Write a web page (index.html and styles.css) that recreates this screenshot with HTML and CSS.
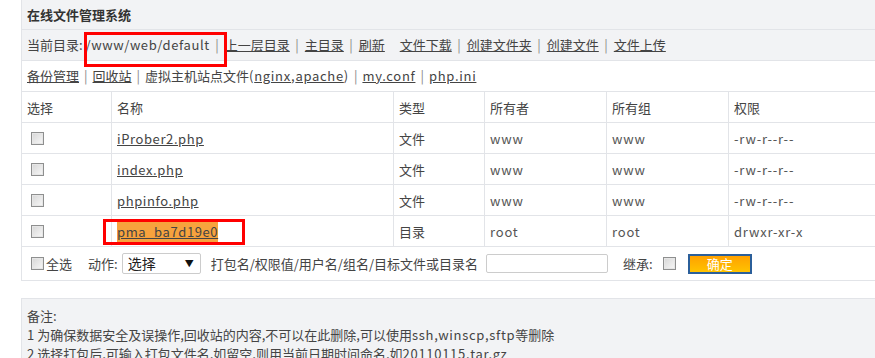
FILE: index.html
```html
<!DOCTYPE html>
<html lang="zh-CN">
<head>
    <meta charset="UTF-8">
    <title>在线文件管理系统</title>
    <link rel="stylesheet" href="styles.css">
</head>
<body>
    <div class="panel">
        <div class="title">在线文件管理系统</div>

        <div class="bar bar-gray">
            当前目录: <span class="path">/www/web/default</span><span class="sep">|</span><a href="#">上一层目录</a><span class="sep">|</span><a href="#">主目录</a><span class="sep">|</span><a href="#">刷新</a>
            <span class="gap"></span>
            <a href="#">文件下载</a><span class="sep">|</span><a href="#">创建文件夹</a><span class="sep">|</span><a href="#">创建文件</a><span class="sep">|</span><a href="#">文件上传</a>
        </div>

        <div class="bar">
            <a href="#">备份管理</a><span class="sep">|</span><a href="#">回收站</a><span class="sep">|</span>虚拟主机站点文件<span class="en">(<a href="#">nginx</a>,<a href="#">apache</a>)</span><span class="sep">|</span><a href="#" class="en">my.conf</a><span class="sep">|</span><a href="#" class="en">php.ini</a>
        </div>

        <table class="files">
            <tr>
                <th class="col-sel">选择</th>
                <th class="col-name">名称</th>
                <th class="col-type">类型</th>
                <th class="col-owner">所有者</th>
                <th class="col-group">所有组</th>
                <th>权限</th>
            </tr>
            <tr>
                <td><input type="checkbox" class="chk"></td>
                <td><a href="#">iProber2.php</a></td>
                <td>文件</td>
                <td class="latin">www</td>
                <td class="latin">www</td>
                <td class="latin">-rw-r--r--</td>
            </tr>
            <tr>
                <td><input type="checkbox" class="chk"></td>
                <td><a href="#">index.php</a></td>
                <td>文件</td>
                <td class="latin">www</td>
                <td class="latin">www</td>
                <td class="latin">-rw-r--r--</td>
            </tr>
            <tr>
                <td><input type="checkbox" class="chk"></td>
                <td><a href="#">phpinfo.php</a></td>
                <td>文件</td>
                <td class="latin">www</td>
                <td class="latin">www</td>
                <td class="latin">-rw-r--r--</td>
            </tr>
            <tr>
                <td><input type="checkbox" class="chk"></td>
                <td><a href="#" class="marked">pma_ba7d19e0</a></td>
                <td>目录</td>
                <td class="latin">root</td>
                <td class="latin">root</td>
                <td class="latin">drwxr-xr-x</td>
            </tr>
        </table>

        <div class="actions">
            <label class="all"><input type="checkbox" class="chk">全选</label>
            <span class="lbl lbl-act">动作:</span>
            <div class="select">选择<span class="arrow">▼</span></div>
            <span class="lbl">打包名/权限值/用户名/组名/目标文件或目录名</span>
            <input type="text" class="field">
            <span class="lbl inherit">继承:</span>
            <input type="checkbox" class="chk">
            <button class="ok">确定</button>
        </div>

        <!-- 标注框 -->
        <div class="mark mark-path"></div>
        <div class="mark mark-dir"></div>
    </div>

    <div class="notes">
        <p>备注:</p>
        <p>1 为确保数据安全及误操作,回收站的内容,不可以在此删除,可以使用<span class="en">ssh,winscp,sftp</span>等删除</p>
        <p>2 选择打包后,可输入打包文件名,如留空,则用当前日期时间命名,如<span class="en">20110115.tar.gz</span></p>
    </div>
</body>
</html>
```

FILE: styles.css
```css
body {
    margin: 0;
    padding: 0 0 0 21px;
    font-family: "Noto Sans CJK SC", "Noto Sans", sans-serif;
    font-size: 13px;
    color: #444;
    background: #fff;
    overflow: hidden;
}
a {
    color: #444;
    text-decoration: underline;
}
.en {
    letter-spacing: 0.7px;
}
.panel {
    position: relative;
    border-left: 1px solid #e2e4e8;
    border-bottom: 1px solid #e2e4e8;
}
.title {
    height: 29px;
    line-height: 29px;
    padding-left: 5px;
    font-weight: bold;
    color: #333;
    background: #f2f3f5;
    border-bottom: 1px solid #e2e4e8;
}
.bar {
    height: 30px;
    line-height: 30px;
    padding-left: 5px;
    border-bottom: 1px solid #e2e4e8;
    white-space: nowrap;
}
.bar-gray {
    background: #f2f3f5;
}
.path {
    letter-spacing: 0.6px;
}
.sep {
    color: #888;
    margin: 0 5px;
}
.bar-gray .sep {
    margin: 0 6px 0 5.5px;
}
.gap {
    display: inline-block;
    width: 9px;
}
.files {
    border-collapse: collapse;
    width: 100%;
}
.files th,
.files td {
    height: 30px;
    padding: 0 0 0 5px;
    text-align: left;
    font-weight: normal;
    border-bottom: 1px solid #e2e4e8;
    border-right: 1px solid #e2e4e8;
}
.files th:last-child,
.files td:last-child {
    border-right: none;
}
.col-sel { width: 84px; }
.col-name { width: 276px; }
.col-type { width: 85px; }
.col-owner { width: 116px; }
.col-group { width: 116px; }
.latin {
    letter-spacing: 0.8px;
    color: #555;
}
.files a {
    letter-spacing: 0.6px;
}
.marked {
    background: #f7a23d;
    padding: 1px 0;
}
.chk {
    -webkit-appearance: none;
    appearance: none;
    width: 13px;
    height: 13px;
    margin: 3px 3px 3px 4px;
    vertical-align: middle;
    border: 1px solid #8e8f8f;
    background: linear-gradient(135deg, #d6d6d6, #f8f8f8);
    box-shadow: inset 0 0 0 1px #e6e6e6;
    box-sizing: border-box;
}
.actions {
    display: flex;
    align-items: center;
    height: 33px;
    padding-left: 5px;
    white-space: nowrap;
}
.all {
    display: flex;
    align-items: center;
    margin-right: 16px;
}
.all .chk {
    margin-right: 2px;
}
.lbl {
    margin-right: 6px;
}
.lbl-act {
    margin-right: 4px;
}
.select {
    position: relative;
    width: 79px;
    height: 21px;
    line-height: 19px;
    box-sizing: border-box;
    border: 1px solid #ccc;
    border-radius: 2px;
    padding-left: 5px;
    font-size: 14px;
    color: #222;
    margin-right: 10px;
}
.arrow {
    position: absolute;
    right: 6px;
    top: 0;
    font-size: 9px;
    color: #111;
}
.field {
    width: 122px;
    height: 19px;
    box-sizing: border-box;
    border: 1px solid #ccc;
    border-radius: 2px;
    margin: 0 0 0 2px;
}
.inherit {
    margin-left: 15px;
}
.ok {
    width: 64px;
    height: 20px;
    margin-left: 9px;
    padding: 0;
    border: 2px solid #2b5f9a;
    background: linear-gradient(#ffa100, #ffc300);
    color: #fff;
    font-family: inherit;
    font-size: 13px;
    line-height: 16px;
}
.mark {
    position: absolute;
    border: 3px solid #f00;
    box-sizing: border-box;
}
.mark-path {
    left: 62px;
    top: 32px;
    width: 143px;
    height: 35px;
}
.mark-dir {
    left: 81px;
    top: 219px;
    width: 142px;
    height: 26px;
}
.notes {
    margin-top: 17px;
    padding: 7px 5px 0;
    height: 60px;
    background: #f2f3f5;
    border-left: 1px solid #e2e4e8;
    border-top: 1px solid #e2e4e8;
}
.notes p {
    margin: 0;
    line-height: 19px;
    white-space: nowrap;
}
```
